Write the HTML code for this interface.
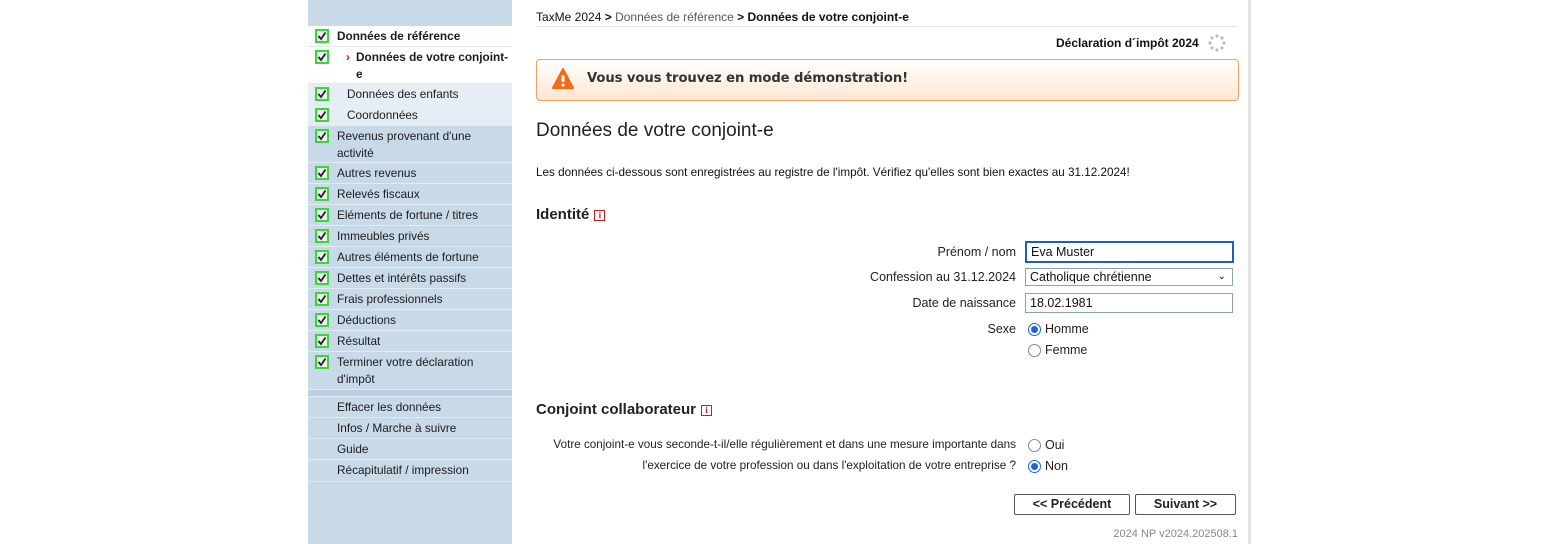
<!DOCTYPE html>
<html><head><meta charset="utf-8"><style>
*{margin:0;padding:0;box-sizing:border-box}
body{width:1550px;height:544px;background:#fff;font-family:"Liberation Sans",Arial,sans-serif;font-size:13px;color:#222;position:relative;overflow:hidden}
.abs{position:absolute}
#side{left:308px;top:0;width:204px;height:544px;background:#c8d9e8}
.row{position:absolute;left:0;width:204px;border-bottom:1px solid #e2eaf2;font-size:11.8px;line-height:17px;color:#1c1c1c}
.row .t{position:absolute;left:29px;top:2px;width:172px}
.cb{position:absolute;left:7px;top:3px;width:14px;height:14px;border:2px solid #35d835;background:#eef0f0}
.cb svg{position:absolute;left:0;top:0}
#main{left:512px;top:0;width:736px;height:544px;background:#fff}
#shadow{left:1248px;top:0;width:3px;height:544px;background:#e4e4e4}
.lbl{position:absolute;text-align:right;font-size:12.5px;color:#222}
.inp{position:absolute;border:1px solid #8aa2bd;height:19px;font-size:12.5px;line-height:17px;padding-left:4px;color:#111;background:#fff}
.radio{position:absolute;width:13px;height:13px;border-radius:50%;border:1px solid #888;background:#fff}
.radio.on{border:1px solid #1a66d6}
.radio.on::after{content:"";position:absolute;left:2px;top:2px;width:7px;height:7px;border-radius:50%;background:#1a66d6}
.btn{position:absolute;height:21px;border:1px solid #555;border-radius:2px;background:#fff;font-weight:bold;font-size:12.5px;text-align:center;line-height:19px;color:#222}
.info{display:inline-block;width:11px;height:11px;border:1px solid #c0202a;color:#c0202a;font-size:9px;line-height:9px;text-align:center;font-weight:bold;font-family:"Liberation Serif",serif;vertical-align:1px;margin-left:5px}
</style></head><body>
<div id="side" class="abs">
 <div class="row" style="top:26px;height:21px;background:#fff;font-weight:bold"><div class="cb"><svg width="10" height="10"><path d="M1.5 5 L4 8 L8.5 1.5" stroke="#222" stroke-width="1.8" fill="none"/></svg></div><div class="t">Données de référence</div></div>
 <div class="row" style="top:47px;height:37px;background:#fff;font-weight:bold"><div class="cb"><svg width="10" height="10"><path d="M1.5 5 L4 8 L8.5 1.5" stroke="#222" stroke-width="1.8" fill="none"/></svg></div><span class="abs" style="left:38px;top:2px;color:#d01010">›</span><div class="t" style="left:48px;width:156px">Données de votre conjoint-e</div></div>
 <div class="row" style="top:84px;height:21px;background:#e6edf4"><div class="cb"><svg width="10" height="10"><path d="M1.5 5 L4 8 L8.5 1.5" stroke="#222" stroke-width="1.8" fill="none"/></svg></div><div class="t" style="left:39px">Données des enfants</div></div>
 <div class="row" style="top:105px;height:21px;background:#e6edf4"><div class="cb"><svg width="10" height="10"><path d="M1.5 5 L4 8 L8.5 1.5" stroke="#222" stroke-width="1.8" fill="none"/></svg></div><div class="t" style="left:39px">Coordonnées</div></div>
 <div class="row" style="top:126px;height:37px"><div class="cb"><svg width="10" height="10"><path d="M1.5 5 L4 8 L8.5 1.5" stroke="#222" stroke-width="1.8" fill="none"/></svg></div><div class="t" style="width:140px">Revenus provenant d'une activité</div></div>
 <div class="row" style="top:163px;height:21px"><div class="cb"><svg width="10" height="10"><path d="M1.5 5 L4 8 L8.5 1.5" stroke="#222" stroke-width="1.8" fill="none"/></svg></div><div class="t">Autres revenus</div></div>
 <div class="row" style="top:184px;height:21px"><div class="cb"><svg width="10" height="10"><path d="M1.5 5 L4 8 L8.5 1.5" stroke="#222" stroke-width="1.8" fill="none"/></svg></div><div class="t">Relevés fiscaux</div></div>
 <div class="row" style="top:205px;height:21px"><div class="cb"><svg width="10" height="10"><path d="M1.5 5 L4 8 L8.5 1.5" stroke="#222" stroke-width="1.8" fill="none"/></svg></div><div class="t">Eléments de fortune / titres</div></div>
 <div class="row" style="top:226px;height:21px"><div class="cb"><svg width="10" height="10"><path d="M1.5 5 L4 8 L8.5 1.5" stroke="#222" stroke-width="1.8" fill="none"/></svg></div><div class="t">Immeubles privés</div></div>
 <div class="row" style="top:247px;height:21px"><div class="cb"><svg width="10" height="10"><path d="M1.5 5 L4 8 L8.5 1.5" stroke="#222" stroke-width="1.8" fill="none"/></svg></div><div class="t">Autres éléments de fortune</div></div>
 <div class="row" style="top:268px;height:21px"><div class="cb"><svg width="10" height="10"><path d="M1.5 5 L4 8 L8.5 1.5" stroke="#222" stroke-width="1.8" fill="none"/></svg></div><div class="t">Dettes et intérêts passifs</div></div>
 <div class="row" style="top:289px;height:21px"><div class="cb"><svg width="10" height="10"><path d="M1.5 5 L4 8 L8.5 1.5" stroke="#222" stroke-width="1.8" fill="none"/></svg></div><div class="t">Frais professionnels</div></div>
 <div class="row" style="top:310px;height:21px"><div class="cb"><svg width="10" height="10"><path d="M1.5 5 L4 8 L8.5 1.5" stroke="#222" stroke-width="1.8" fill="none"/></svg></div><div class="t">Déductions</div></div>
 <div class="row" style="top:331px;height:21px"><div class="cb"><svg width="10" height="10"><path d="M1.5 5 L4 8 L8.5 1.5" stroke="#222" stroke-width="1.8" fill="none"/></svg></div><div class="t">Résultat</div></div>
 <div class="row" style="top:352px;height:38px"><div class="cb"><svg width="10" height="10"><path d="M1.5 5 L4 8 L8.5 1.5" stroke="#222" stroke-width="1.8" fill="none"/></svg></div><div class="t" style="width:150px">Terminer votre déclaration d'impôt</div></div>
 <div class="row" style="top:390px;height:7px;background:#bccfe0"></div>
 <div class="row" style="top:397px;height:21px"><div class="t">Effacer les données</div></div>
 <div class="row" style="top:418px;height:21px"><div class="t">Infos / Marche à suivre</div></div>
 <div class="row" style="top:439px;height:21px"><div class="t">Guide</div></div>
 <div class="row" style="top:460px;height:22px"><div class="t">Récapitulatif / impression</div></div>
</div>
<div id="main" class="abs"></div>
<div id="shadow" class="abs"></div>

<div class="abs" style="left:536px;top:10px;font-size:12px;color:#111">TaxMe 2024 <b>&gt;</b> <span style="color:#555">Données de référence</span> <b>&gt; Données de votre conjoint-e</b></div>
<div class="abs" style="left:536px;top:26px;width:702px;height:1px;background:#dde3e8"></div>
<div class="abs" style="left:1056px;top:36px;font-size:12px;font-weight:bold;color:#111">Déclaration d´impôt 2024</div>
<svg class="abs" style="left:1207px;top:33px" width="20" height="20"><g fill="#bbb"><circle cx="10" cy="3" r="1.6"/><circle cx="15" cy="5" r="1.6"/><circle cx="17" cy="10" r="1.6"/><circle cx="15" cy="15" r="1.6"/><circle cx="10" cy="17" r="1.6"/><circle cx="5" cy="15" r="1.6"/><circle cx="3" cy="10" r="1.6"/><circle cx="5" cy="5" r="1.6"/></g></svg>
<div class="abs" style="left:536px;top:59px;width:703px;height:42px;border:1px solid #f0a060;border-radius:4px;background:linear-gradient(#fff 0%,#fde6d2 100%)"></div>
<svg class="abs" style="left:551px;top:67px" width="24" height="24"><path d="M12 2 L22 21 L2 21 Z" fill="#f46a16" stroke="#f46a16" stroke-width="2" stroke-linejoin="round"/><rect x="10.5" y="8" width="3" height="7" rx="1" fill="#fff"/><circle cx="12" cy="18" r="1.6" fill="#fff"/></svg>
<div class="abs" style="left:587px;top:71px;font-size:13.2px;font-weight:bold;color:#333;font-family:'DejaVu Sans',sans-serif;letter-spacing:-0.1px">Vous vous trouvez en mode démonstration!</div>

<div class="abs" style="left:536px;top:120px;font-size:19px;color:#222">Données de votre conjoint-e</div>
<div class="abs" style="left:536px;top:166px;font-size:11.7px;color:#111">Les données ci-dessous sont enregistrées au registre de l'impôt. Vérifiez qu'elles sont bien exactes au 31.12.2024!</div>

<div class="abs" style="left:536px;top:206px;font-size:15px;font-weight:bold;color:#222">Identité<span class="info">i</span></div>

<div class="lbl" style="left:820px;width:196px;top:245px">Prénom / nom</div>
<div class="inp" style="left:1025px;top:241px;width:209px;height:22px;border:2px solid #1f5fc0;line-height:18px">Eva Muster</div>
<div class="lbl" style="left:820px;width:196px;top:270px">Confession au 31.12.2024</div>
<div class="inp" style="left:1025px;top:268px;width:208px;height:18px;line-height:16px">Catholique chrétienne<span class="abs" style="right:6px;top:0;font-size:10px">&#8964;</span></div>
<div class="lbl" style="left:820px;width:196px;top:296px">Date de naissance</div>
<div class="inp" style="left:1025px;top:293px;width:208px;height:20px;line-height:18px">18.02.1981</div>
<div class="lbl" style="left:820px;width:196px;top:322px">Sexe</div>
<div class="radio on" style="left:1028px;top:323px"></div><div class="abs" style="left:1045px;top:322px;font-size:12.5px">Homme</div>
<div class="radio" style="left:1028px;top:344px"></div><div class="abs" style="left:1045px;top:343px;font-size:12.5px">Femme</div>

<div class="abs" style="left:536px;top:401px;font-size:15px;font-weight:bold;color:#222">Conjoint collaborateur<span class="info">i</span></div>
<div class="lbl" style="left:520px;width:496px;top:438px;font-size:11.7px">Votre conjoint-e vous seconde-t-il/elle régulièrement et dans une mesure importante dans</div>
<div class="lbl" style="left:520px;width:496px;top:459px;font-size:11.7px">l'exercice de votre profession ou dans l'exploitation de votre entreprise ?</div>
<div class="radio" style="left:1028px;top:439px"></div><div class="abs" style="left:1045px;top:438px;font-size:12.5px">Oui</div>
<div class="radio on" style="left:1028px;top:460px"></div><div class="abs" style="left:1045px;top:459px;font-size:12.5px">Non</div>

<div class="btn" style="left:1014px;top:494px;width:116px">&lt;&lt; Précédent</div>
<div class="btn" style="left:1135px;top:494px;width:101px">Suivant &gt;&gt;</div>
<div class="abs" style="left:1100px;top:528px;width:138px;text-align:right;font-size:11px;color:#888">2024 NP v2024.202508.1</div>
</body></html>
